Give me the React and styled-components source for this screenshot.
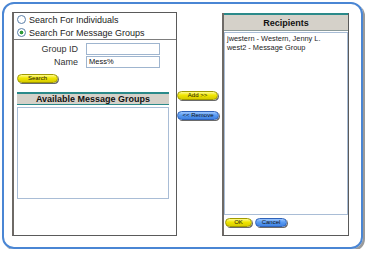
import React from 'react';
import styled, { createGlobalStyle } from 'styled-components';

const GlobalStyle = createGlobalStyle`
	body {
		margin: 0;
		background: #fff;
		font-family: "Liberation Sans", Arial, sans-serif;
		color: #000;
	}
`;

const Frame = styled.div`
	box-sizing: border-box;
	margin: 2px 0 0 2px;
	width: 361px;
	height: 247px;
	border: 2px solid #4a86d4;
	border-radius: 12px;
	box-shadow: 2px 2px 0 #9a9a9a;
	padding: 8px 12px 11px 8px;
	display: flex;
	align-items: stretch;
`;

const LeftPanel = styled.div`
	box-sizing: border-box;
	width: 165px;
	border: 1px solid #5a5a5a;
	border-left: 2px solid #6e6a66;
	display: flex;
	flex-direction: column;
`;

const RadioGroup = styled.div`
	height: 26px;
	display: flex;
	flex-direction: column;
	padding-left: 3px;
`;

const RadioRow = styled.label`
	height: 13px;
	display: flex;
	align-items: center;
	gap: 3px;
	font-size: 9px;
	color: #222;
`;

const RadioDot = styled.span`
	box-sizing: border-box;
	width: 9px;
	height: 9px;
	border-radius: 50%;
	border: 1px solid #5b7fa8;
	background: radial-gradient(circle, ${p => (p.checked ? '#2e9a3a 0, #2e9a3a 1.6px, #fff 2.2px' : '#fff 0')}, #fff 100%);
`;

const SearchSection = styled.div`
	flex: 1;
	border-top: 1px solid #7d7d7d;
	padding: 3px 0 0 2px;
	display: flex;
	flex-direction: column;
`;

const FieldGrid = styled.div`
	display: grid;
	grid-template-columns: 62px 74px;
	column-gap: 8px;
	row-gap: 1px;
	align-items: center;
`;

const FieldLabel = styled.span`
	text-align: right;
	font-size: 9px;
	color: #333;
`;

const TextInput = styled.div`
	box-sizing: border-box;
	height: 12px;
	border: 1px solid #9fb5cf;
	font-size: 7.5px;
	line-height: 10px;
	padding-left: 2px;
	color: #111;
`;

const PillButton = styled.button`
	box-sizing: border-box;
	width: ${p => p.w}px;
	height: 9px;
	padding: 0;
	border: 1px solid ${p => (p.blue ? '#2f62b8' : '#a09a00')};
	border-radius: 5px;
	background: ${p =>
		p.blue
			? 'linear-gradient(#9cc6ff, #5a9cf2 45%, #3f82e4)'
			: 'linear-gradient(#fffb90, #f0e600 45%, #d8cc00)'};
	box-shadow: 1px 1px 0 #6a6a6a;
	font-family: "Liberation Sans", Arial, sans-serif;
	font-size: 6px;
	line-height: 7px;
	color: #111;
	text-align: center;
	cursor: pointer;
`;

const SearchRow = styled.div`
	margin: 6px 0 0 1px;
	display: flex;
`;

const ListBlock = styled.div`
	margin: 9px 7px 0 1px;
	display: flex;
	flex-direction: column;
`;

const ListHeader = styled.div`
	height: 10px;
	border-top: 2px solid #2b8a8a;
	border-bottom: 1px solid #2b8a8a;
	background: #d5d1c9;
	font-size: 9px;
	font-weight: bold;
	line-height: 11px;
	text-align: center;
	color: #111;
`;

const ListBox = styled.div`
	box-sizing: border-box;
	height: ${p => p.h}px;
	margin-top: ${p => p.gap}px;
	border: 1px solid #a9bdd6;
	background: #fff;
	padding: 1px 2px;
`;

const ListItem = styled.div`
	font-size: 7.4px;
	line-height: 9px;
	color: #222;
	white-space: nowrap;
`;

const Middle = styled.div`
	width: 45px;
	padding-top: 79px;
	display: flex;
	flex-direction: column;
	gap: 11px;
	align-items: flex-start;
`;

const RightPanel = styled.div`
	box-sizing: border-box;
	width: 127px;
	margin-top: 1px;
	border: 1px solid #5a5a5a;
	border-top: none;
	border-left: 2px solid #6e6a66;
	display: flex;
	flex-direction: column;
`;

const RightHeader = styled(ListHeader)`
	height: 15px;
	line-height: 16px;
	border-bottom-color: #8a9a9a;
`;

const Footer = styled.div`
	display: flex;
	gap: 3px;
	padding: 3px 0 0 1px;
`;

const App = () => {
	return (
		<>
			<GlobalStyle />
			<Frame>
				<LeftPanel>
					<RadioGroup>
						<RadioRow><RadioDot />Search For Individuals</RadioRow>
						<RadioRow><RadioDot checked />Search For Message Groups</RadioRow>
					</RadioGroup>
					<SearchSection>
						<FieldGrid>
							<FieldLabel>Group ID</FieldLabel>
							<TextInput />
							<FieldLabel>Name</FieldLabel>
							<TextInput>Mess%</TextInput>
						</FieldGrid>
						<SearchRow>
							<PillButton w={41}>Search</PillButton>
						</SearchRow>
						<ListBlock>
							<ListHeader>Available Message Groups</ListHeader>
							<ListBox h={92} gap={2} />
						</ListBlock>
					</SearchSection>
				</LeftPanel>
				<Middle>
					<PillButton w={41}>Add &gt;&gt;</PillButton>
					<PillButton w={42} blue>&lt;&lt; Remove</PillButton>
				</Middle>
				<RightPanel>
					<RightHeader>Recipients</RightHeader>
					<ListBox h={183} gap={1}>
						<ListItem>jwestern - Western, Jenny L.</ListItem>
						<ListItem>west2 - Message Group</ListItem>
					</ListBox>
					<Footer>
						<PillButton w={27}>OK</PillButton>
						<PillButton w={32} blue>Cancel</PillButton>
					</Footer>
				</RightPanel>
			</Frame>
		</>
	);
};

export default App;
